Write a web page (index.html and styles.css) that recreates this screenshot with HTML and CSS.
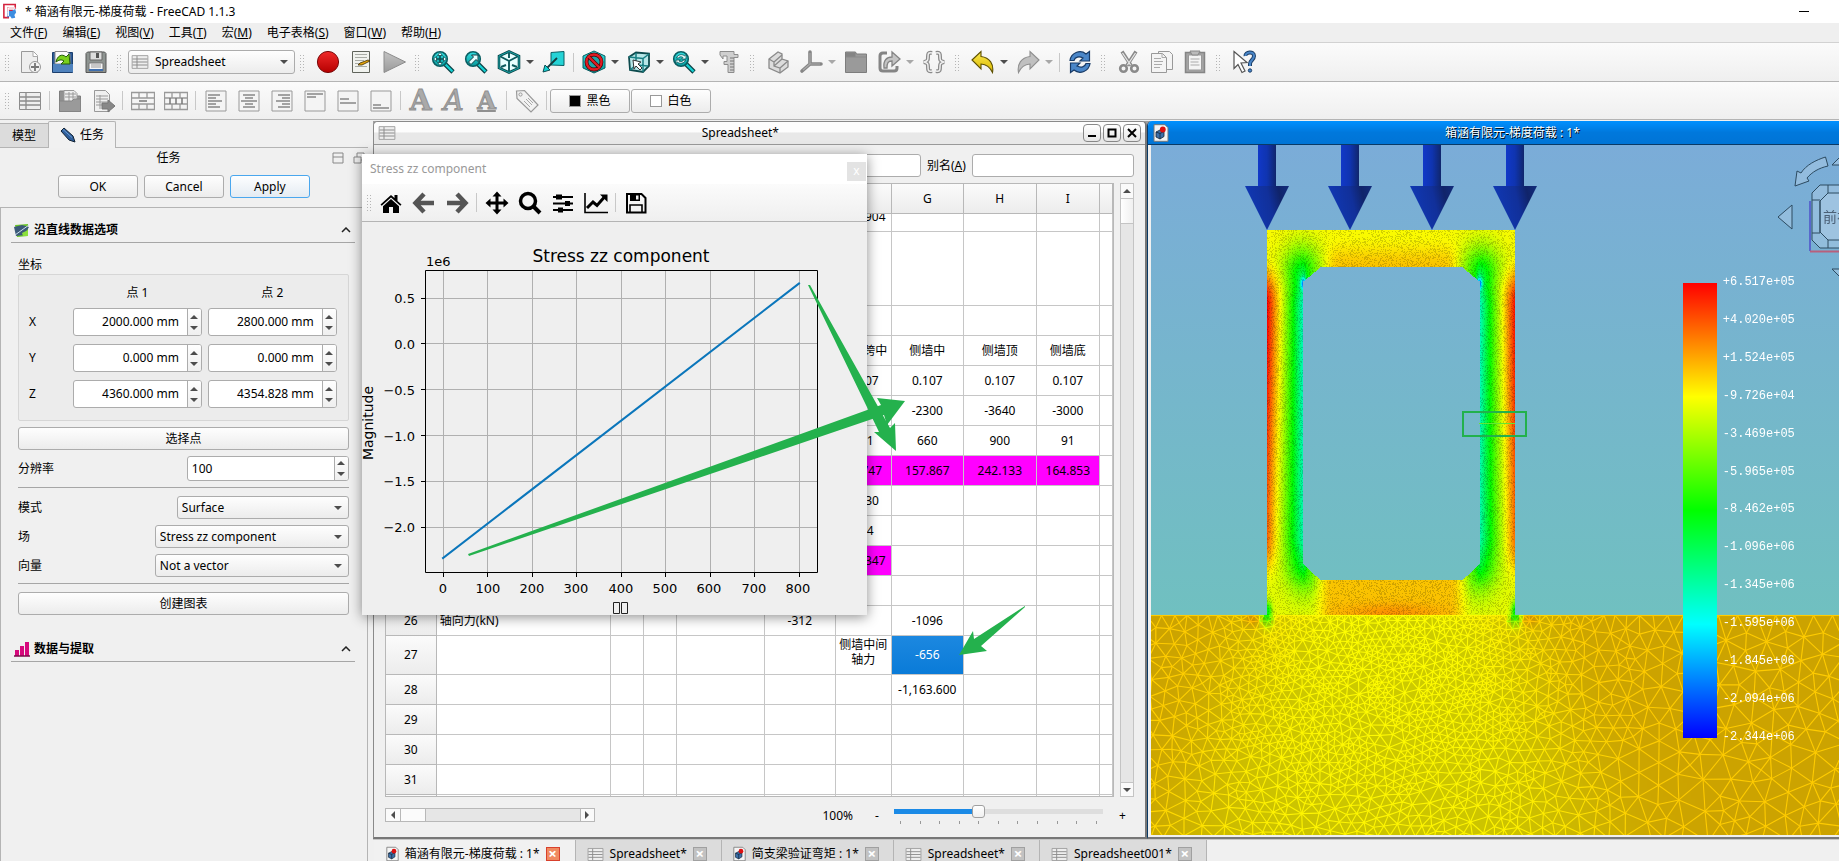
FILE: index.html
```
<!DOCTYPE html>
<html lang="zh-CN">
<head>
<meta charset="utf-8">
<title>箱涵有限元-梯度荷载 - FreeCAD 1.1.3</title>
<link rel="stylesheet" href="styles.css">
</head>
<body>
<svg class="defs" width="0" height="0" aria-hidden="true">
  <defs>
    <linearGradient id="gTeal" x1="0" y1="0" x2="0" y2="1"><stop offset="0" stop-color="#34e0e2"/><stop offset="1" stop-color="#06989a"/></linearGradient>
    <linearGradient id="gGray" x1="0" y1="0" x2="0" y2="1"><stop offset="0" stop-color="#c4c4c4"/><stop offset="1" stop-color="#9a9a9a"/></linearGradient>
    <linearGradient id="gRed" x1="0" y1="0" x2="0" y2="1"><stop offset="0" stop-color="#f02a2a"/><stop offset="1" stop-color="#b50000"/></linearGradient>
    <linearGradient id="gYel" x1="0" y1="0" x2="0" y2="1"><stop offset="0" stop-color="#fce94f"/><stop offset="1" stop-color="#d9b800"/></linearGradient>
    <symbol id="sheet" viewBox="0 0 24 24"><path d="M1.500 3.500h21v17h-21z" fill="#eee" stroke="#8c8c8c"/><path d="M2 8h20M2 12h20M2 16h20M8 4v16" stroke="#8c8c8c" stroke-width="1.300"/></symbol>
    <symbol id="doc3d" viewBox="0 0 16 18"><path d="M1 .7h11l3 3v13.600H1z" fill="#f4f4f4" stroke="#777"/><path d="M3 8l4-2 4 1.500v5L7 15l-4-2z" fill="#3d6fa8" stroke="#123" stroke-width=".8"/><path d="M3 8l4 1.500 4-2M7 9.500V15" stroke="#123" stroke-width=".8" fill="none"/><circle cx="9.800" cy="5.500" r="2.900" fill="#d11"/></symbol>
    <symbol id="lens" viewBox="0 0 24 24"><path d="M14 14l8 8" stroke="#0b3f43" stroke-width="4.600"/><path d="M14 14l7.500 7.500" stroke="#16d0d2" stroke-width="2.400"/><circle cx="9" cy="9" r="7.300" fill="url(#gTeal)" stroke="#0b5f63" stroke-width="1.600"/></symbol>
  </defs>
</svg>

<header class="titlebar">
  <svg class="app-logo" viewBox="0 0 16 18"><path d="M1 1h13v4H6v3h5v4H6v4H1z" fill="#fff" stroke="#d4213d" stroke-width="1.800"/><path d="M5 16V8l5 .5L14 6l1 4-2 3 1 3-4 1-2-3z" fill="#3d8de0"/><path d="M6 5h8M6 5v9" stroke="#fff" stroke-width="1.500"/></svg>
  <span>* 箱涵有限元-梯度荷载 - FreeCAD 1.1.3</span>
  <button class="win-min" aria-label="最小化"></button>
</header>
<nav class="menubar">
  <button>文件(<u>F</u>)</button><button>编辑(<u>E</u>)</button><button>视图(<u>V</u>)</button><button>工具(<u>T</u>)</button><button>宏(<u>M</u>)</button><button>电子表格(<u>S</u>)</button><button>窗口(<u>W</u>)</button><button>帮助(<u>H</u>)</button>
</nav>

<div class="toolbar">
  <i class="grip grip-first"></i>
  <button class="tb" aria-label="新建"><svg viewBox="0 0 24 24"><path d="M3.500 1.500h12l4 4v17h-16z" fill="#eee" stroke="#999"/><path d="M15 1.500v5h5" fill="#fff" stroke="#aaa"/><circle cx="17" cy="17" r="5.500" fill="#f4f4f4" stroke="#999"/><path d="M17 13v8M13 17h8" stroke="#777" stroke-width="1.800"/></svg></button>
  <button class="tb" aria-label="打开"><svg viewBox="0 0 24 24"><path d="M1.500 2.500h20v20h-20z" fill="#2d5c98" stroke="#1c3f6e"/><path d="M4 1.500h12l3 3V14H4z" fill="#fafafa" stroke="#888"/><path d="M2 14h20v8H2z" fill="#4f82bd"/><path d="M5 12c1-6 6-9 10-5l3-3 1 10h-9l3-3c-3-2-5-1-8 1z" fill="#7ad01c" stroke="#235b08"/></svg></button>
  <button class="tb" aria-label="保存"><svg viewBox="0 0 24 24"><path d="M2 3.500L3.500 2h17L22 3.500v19H2z" fill="#8e9491" stroke="#555"/><path d="M6 2h12v8H6z" fill="#ddd" stroke="#666"/><path d="M12 3h3v5h-3z" fill="#555"/><path d="M5 13h14v8H5z" fill="#f6f6f6" stroke="#777"/><path d="M7 15h10M7 17h10" stroke="#999"/><path d="M5 19h14v2H5z" fill="#3f6fae"/></svg></button>
  <i class="grip"></i>
  <label class="combo wb"><svg class="wb-ico"><use href="#sheet"/></svg><select aria-label="工作台"><option>Spreadsheet</option></select></label>
  <i class="grip"></i>
  <button class="tb" aria-label="录制宏"><svg viewBox="0 0 24 24"><circle cx="12" cy="12" r="10.600" fill="url(#gRed)" stroke="#7a0b0b"/></svg></button>
  <button class="tb" aria-label="宏"><svg viewBox="0 0 24 24"><path d="M3.500 1.500h17v21h-17z" fill="#f1f3ef" stroke="#60645c"/><path d="M6 4.500h12M6 7.500h12M6 10.500h9M6 13.500h5M6 16.500h12" stroke="#a8aba5"/><path d="M9 15l2-2 8-3 2 1-8 4z" fill="#e5a50a" stroke="#3c2b00" stroke-width=".8"/></svg></button>
  <button class="tb" aria-label="执行宏"><svg viewBox="0 0 24 24"><path d="M2 1.500v21L23.500 12z" fill="url(#gGray)" stroke="#8c8c8c"/></svg></button>
  <i class="grip"></i>
  <button class="tb" aria-label="全部适应"><svg viewBox="0 0 24 24"><use href="#lens"/><path d="M9 4v10M4 9h10" stroke="#0c4b50" stroke-width="1.600"/><path d="M9 2.500l2.500 3h-5zM9 15.500l2.500-3h-5zM2.500 9l3-2.500v5zM15.500 9l-3-2.500v5z" fill="#e9ffff" stroke="#0c4b50" stroke-width=".8"/></svg></button>
  <button class="tb" aria-label="适应选择"><svg viewBox="0 0 24 24"><use href="#lens"/><path d="M4.500 12l5-5-2-2H14v6.500l-2-2-5 5z" fill="#e9ffff" stroke="#0c3b40"/></svg></button>
  <button class="tb" aria-label="等轴测"><svg viewBox="0 0 24 24"><path d="M12 1.500l10 4.500v12l-10 4.500L2 18V6z" fill="#e8ffff" stroke="#0d4a4d" stroke-width="2.600"/><path d="M2.500 6L12 11l9.500-5M12 11v11M12 2v6M4 17l5-2M20 17l-5-2" stroke="#0d5a5d" stroke-width="1.900" fill="none"/><path d="M12 1.500l10 4.500v12l-10 4.500L2 18V6z" fill="none" stroke="#17b8bb" stroke-width=".8"/></svg></button><i class="dd"></i>
  <button class="tb" aria-label="与所选对齐"><svg viewBox="0 0 24 24"><path d="M9 2.500l13-1v14l-13-.5z" fill="#25d3d6" stroke="#0b5f63"/><path d="M15 8L4 19" stroke="#123c3e" stroke-width="1.800"/><path d="M1 22l2-7 5 5z" fill="#16d0d2" stroke="#0b4c50"/></svg></button>
  <i class="sep"></i>
  <button class="tb" aria-label="绘图样式"><svg viewBox="0 0 24 24"><path d="M12 1l11 5v12l-11 5L1 18V6z" fill="url(#gTeal)" stroke="#0b5f63"/><circle cx="12" cy="12" r="7.500" fill="#1fa5a8" stroke="#460404" stroke-width="3.800"/><circle cx="12" cy="12" r="7.500" fill="none" stroke="#e01b24" stroke-width="2.400"/><path d="M7 7l10 10" stroke="#460404" stroke-width="3.800"/><path d="M6.500 6.500l11 11" stroke="#e01b24" stroke-width="2.400"/></svg></button><i class="dd"></i>
  <button class="tb" aria-label="边界框"><svg viewBox="0 0 24 24"><path d="M2 7l7-4.500 13 1V16l-6 6-13-2z" fill="#b7e6e7" stroke="#0d4a4d" stroke-width="1.800"/><path d="M2 7l14 1.500L22 4M16 8.500V22M9 3v12l-6 5M9 15l12 1" fill="none" stroke="#177f83" stroke-width="1.500"/><path d="M6 10l8 2-3 2 4 4-2 2-4-4-2 3z" fill="#fff" stroke="#333"/></svg></button><i class="dd"></i>
  <button class="tb" aria-label="同步视图"><svg viewBox="0 0 24 24"><use href="#lens"/><path d="M4.500 8C6 4 11 4 12.500 6L14 4.500V9H9.500l1.500-1.500C9 6 7 7 6.500 8zM13.500 10c-1.500 4-6.500 4-8 2L4 13.500V10h4.500L7 11c2 1 4 .5 4.500-1z" fill="#e9ffff" stroke="#0c4b50" stroke-width=".8"/></svg></button><i class="dd"></i>
  <button class="tb" aria-label="测量"><svg viewBox="0 0 24 24"><path d="M3 1.500h14v3h4v3h-4v15h-6v-8H7v-3h3V6H6v3L3 5z" fill="#cfcfcf" stroke="#8c8c8c"/><path d="M13 8h4M13 11h4M13 14h4M13 17h4M13 20h4" stroke="#777"/></svg></button>
  <i class="grip"></i>
  <button class="tb" aria-label="零件"><svg viewBox="0 0 24 24"><path d="M3 9l9-7 4 2v5l6 2v6l-8 6-11-5z" fill="#dcdcdc" stroke="#8a8a8a" stroke-width="1.300"/><path d="M3 9l5 3v4l6 2 8-7M8 12l8-7M8 16l8-7M14 18v5" fill="none" stroke="#8a8a8a" stroke-width="1.300"/></svg></button>
  <button class="tb" aria-label="坐标系"><svg viewBox="0 0 24 24"><path d="M11 2v12M11 14h11M11 14l-8 7" stroke="#858585" stroke-width="3.600" stroke-linecap="round"/><path d="M11 3v11h10M11 14l-7 6" stroke="#a9a9a9" stroke-width="1.200" fill="none"/></svg></button><i class="dd dim"></i>
  <button class="tb" aria-label="组"><svg viewBox="0 0 24 24"><path d="M1.500 2h10l1 2h10v18.500h-21z" fill="#9a9a9a" stroke="#7d7d7d"/><path d="M2 2.500h9.500V7H2z" fill="#848484"/><path d="M2 7h20" stroke="#8a8a8a"/></svg></button>
  <button class="tb" aria-label="链接"><svg viewBox="0 0 24 24"><path d="M10 3H6Q3 3 3 6v12q0 3 3 3h11q3 0 3-3v-2" fill="none" stroke="#858585" stroke-width="3"/><path d="M7 18c-1-8 3-11 8-11V2l8 7-8 7v-5c-4 0-5 2-5 7z" fill="#c4c4c4" stroke="#858585" stroke-width="1.300"/></svg></button><i class="dd dim"></i>
  <button class="tb" aria-label="变量集"><svg viewBox="0 0 24 24"><path d="M10 3C6 2 6 4 6 7s0 4-4 5c4 1 4 2 4 5s0 5 4 4M14 3c4-1 4 1 4 4s0 4 4 5c-4 1-4 2-4 5s0 5-4 4" fill="none" stroke="#8a8a8a" stroke-width="4"/><path d="M10 3C6 2 6 4 6 7s0 4-4 5c4 1 4 2 4 5s0 5 4 4M14 3c4-1 4 1 4 4s0 4 4 5c-4 1-4 2-4 5s0 5-4 4" fill="none" stroke="#eee" stroke-width="1.500"/></svg></button>
  <i class="grip"></i>
  <button class="tb" aria-label="撤销"><svg viewBox="0 0 24 24"><path d="M1 10L10 1.500v5c9 1 13 8 11.500 16C19 17 16 14.500 10 14v5z" fill="url(#gYel)" stroke="#5d5000" stroke-width="1.100"/></svg></button><i class="dd"></i>
  <button class="tb" aria-label="重做"><svg viewBox="0 0 24 24"><path d="M23 10L14 1.500v5C5 7.500 1 14.500 2.500 22.500 5 17 8 14.500 14 14v5z" fill="#c0c0c0" stroke="#8f8f8f" stroke-width="1.100"/></svg></button><i class="dd dim"></i>
  <i class="sep"></i>
  <button class="tb" aria-label="刷新"><svg viewBox="0 0 24 24"><path d="M2 10.500C3 3 12-1 18 4l3.500-2.500v9.500H12l3-3c-4-2-8-1-9 2.500zM22 13.500c-1 7.500-10 11.500-16 6.500l-3.500 2.500V13H12l-3 3c4 2 8 1 9-2.500z" fill="#4a86c8" stroke="#173a66" stroke-width="1.200"/></svg></button>
  <i class="grip"></i>
  <button class="tb" aria-label="剪切"><svg viewBox="0 0 24 24"><path d="M5 1.500l9 14M19 1.500l-9 14" stroke="#8a8a8a" stroke-width="3.500"/><path d="M5.500 3l8 12M18.500 3l-8 12" stroke="#e6e6e6" stroke-width="1.300"/><ellipse cx="6.500" cy="18.500" rx="3.300" ry="3.300" fill="#f3f3f3" stroke="#8a8a8a" stroke-width="2.600"/><ellipse cx="17.500" cy="18.500" rx="3.300" ry="3.300" fill="#f3f3f3" stroke="#8a8a8a" stroke-width="2.600"/></svg></button>
  <button class="tb" aria-label="复制"><svg viewBox="0 0 24 24"><path d="M8.500 1.500h11l3 3v15h-14z" fill="#f4f4f4" stroke="#999"/><path d="M1.500 3.500h11l4 4v15h-15z" fill="#f4f4f4" stroke="#999"/><path d="M4 8.500h7M4 11.500h9M4 14.500h8M4 17.500h6M12 3.500v4h4" stroke="#aaa" fill="none"/></svg></button>
  <button class="tb" aria-label="粘贴"><svg viewBox="0 0 24 24"><path d="M2.500 2.500h19v20h-19z" fill="#a5a5a5" stroke="#858585" stroke-width="1.500"/><path d="M5.500 5h13v15h-13z" fill="#f4f4f4" stroke="#999"/><path d="M7 1h10l-2 4H9z" fill="#bbb" stroke="#888"/><path d="M7.500 9h9M7.500 12h8M7.500 15h9" stroke="#aaa"/></svg></button>
  <i class="grip"></i>
  <button class="tb" aria-label="这是什么？"><svg viewBox="0 0 24 24"><path d="M2 1.500l13 11-6 .5 4 8-3 1.500-4-8-4 4z" fill="#fff" stroke="#555" stroke-width="1.200"/><path d="M13.500 6C13 2 22 .5 22 6c0 4-4 4-4 8v2" fill="none" stroke="#1e3f66" stroke-width="4"/><path d="M13.500 6C13 2 22 .5 22 6c0 4-4 4-4 8v2" fill="none" stroke="#4a86c8" stroke-width="2"/><circle cx="18" cy="20.500" r="1.700" fill="#4a86c8" stroke="#1e3f66"/></svg></button>
</div>

<div class="toolbar toolbar-2">
  <i class="grip grip-first"></i>
  <button class="tb" aria-label="新建表格"><svg><use href="#sheet"/></svg></button>
  <i class="sep"></i>
  <button class="tb" aria-label="导入"><svg viewBox="0 0 24 24"><path d="M1.500 2h5v5h16v15.500h-21z" fill="#929292" stroke="#7d7d7d"/><path d="M6 1.500h10l3 3V13H6z" fill="#eee" stroke="#999"/><path d="M7 5h11M7 8h11M11 3v9M15 3v9" stroke="#999"/><path d="M1.500 12H14l2-2h6.500v12.500h-21z" fill="#9a9a9a" stroke="#858585"/></svg></button>
  <button class="tb" aria-label="导出"><svg viewBox="0 0 24 24"><path d="M3.500 1.500h11l4 4v17h-15z" fill="#f0f0f0" stroke="#999"/><path d="M5 7h12M5 10h12M5 13h12M5 16h6M9 6v14" stroke="#999"/><path d="M11 14h6v-3l7 6-7 6v-3h-6z" fill="#888" stroke="#777"/></svg></button>
  <i class="sep"></i>
  <button class="tb" aria-label="合并"><svg viewBox="0 0 24 24"><path d="M.5 3.500h23v17H.5zM.5 9h23M.5 15h23M8 3v6M16 3v6M8 15v5M16 15v5" fill="none" stroke="#999" stroke-width="1.300"/><path d="M8 12h8" stroke="#777" stroke-width="1.500"/></svg></button>
  <button class="tb" aria-label="拆分"><svg viewBox="0 0 24 24"><path d="M.5 3.500h23v17H.5zM.5 9h23M.5 15h23M8 3v6M16 3v6M8 15v5M16 15v5" fill="none" stroke="#999" stroke-width="1.300"/><path d="M6 9v6M12 9v6M18 9v6" stroke="#777" stroke-width="1.500"/></svg></button>
  <i class="sep"></i>
  <button class="tb" aria-label="左对齐"><svg viewBox="0 0 24 24"><path d="M2 2h20v20H2z" class="abox"/><path d="M4 6h12M4 9h8M4 12h14M4 15h8M4 18h12" class="abar"/></svg></button>
  <button class="tb" aria-label="水平居中"><svg viewBox="0 0 24 24"><path d="M2 2h20v20H2z" class="abox"/><path d="M6 6h12M8 9h8M4 12h16M8 15h8M6 18h12" class="abar"/></svg></button>
  <button class="tb" aria-label="右对齐"><svg viewBox="0 0 24 24"><path d="M2 2h20v20H2z" class="abox"/><path d="M8 6h12M12 9h8M6 12h14M12 15h8M8 18h12" class="abar"/></svg></button>
  <button class="tb" aria-label="顶端对齐"><svg viewBox="0 0 24 24"><path d="M2 2h20v20H2z" class="abox"/><path d="M4 5h16M4 8h9" class="abar"/></svg></button>
  <button class="tb" aria-label="垂直居中"><svg viewBox="0 0 24 24"><path d="M2 2h20v20H2z" class="abox"/><path d="M4 10h9M4 14h16" class="abar"/></svg></button>
  <button class="tb" aria-label="底端对齐"><svg viewBox="0 0 24 24"><path d="M2 2h20v20H2z" class="abox"/><path d="M4 16h8M4 19h16" class="abar"/></svg></button>
  <i class="sep"></i>
  <button class="tb glyph"><b>A</b></button>
  <button class="tb glyph"><em>A</em></button>
  <button class="tb glyph under"><b>A</b></button>
  <i class="sep"></i>
  <button class="tb" aria-label="别名"><svg viewBox="0 0 24 24"><path d="M1.500 2l8-.5L23 16l-7 7L2 9.500z" fill="#f2f2f2" stroke="#999" stroke-width="1.200"/><circle cx="5.500" cy="5.500" r="1.600" fill="none" stroke="#999"/><path d="M11 10l6 6M9 12l6 6M13 9l5 5" stroke="#aaa"/></svg></button>
  <i class="sep"></i>
  <button class="color"><i class="sw black"></i>黑色</button>
  <button class="color"><i class="sw white"></i>白色</button>
</div>

<main class="work">
  <aside class="dock">
    <div class="dock-tabs">
      <button class="dtab">模型</button>
      <button class="dtab on"><svg viewBox="0 0 16 16"><path d="M1 4l3-3 9 8 2 6-6-2z" fill="#2f5f9c" stroke="#123"/><path d="M3 2.500l9 8" stroke="#6b9bd2"/></svg>任务</button>
    </div>
    <div class="dock-title"><span>任务</span>
      <svg viewBox="0 0 12 12"><path d="M1 1h10v10H1zM1 5h10" /></svg>
      <svg viewBox="0 0 12 12"><path d="M1 5h7v6H1zM4 5V1h7v7H8" /></svg>
    </div>
    <div class="dlg"><button class="btn">OK</button><button class="btn">Cancel</button><button class="btn focus">Apply</button></div>
    <div class="panel">
      <h2 class="sec"><svg viewBox="0 0 16 16"><path d="M1 3l13-1v12L3 15z" fill="#6cc52a"/><path d="M0 5l8-2 7 2-5 8-8 1z" fill="#3b5a78"/><path d="M1 13L15 3" stroke="#cde" stroke-width="1"/><path d="M8 11l6-3v6H9z" fill="#8be03a"/></svg><span>沿直线数据选项</span><svg class="chev" viewBox="0 0 10 6"><path d="M1 5l4-4 4 4"/></svg></h2>
      <div class="form">
        <div class="cap">坐标</div>
        <div class="group">
          <span></span><span class="ct">点 1</span><span class="ct">点 2</span>
          <span>X</span><div class="spin"><input aria-label="X 点 1" value="2000.000 mm"><i></i></div><div class="spin"><input aria-label="X 点 2" value="2800.000 mm"><i></i></div>
          <span>Y</span><div class="spin"><input aria-label="Y 点 1" value="0.000 mm"><i></i></div><div class="spin"><input aria-label="Y 点 2" value="0.000 mm"><i></i></div>
          <span>Z</span><div class="spin"><input aria-label="Z 点 1" value="4360.000 mm"><i></i></div><div class="spin"><input aria-label="Z 点 2" value="4354.828 mm"><i></i></div>
        </div>
        <button class="btn wide">选择点</button>
        <div class="frow"><label for="res">分辨率</label><div class="spin left"><input id="res" value="100"><i></i></div></div>
        <hr>
        <div class="frow"><label for="mode">模式</label><span class="combo mid"><select id="mode"><option>Surface</option></select></span></div>
        <div class="frow"><label for="field">场</label><span class="combo big"><select id="field"><option>Stress zz component</option></select></span></div>
        <div class="frow"><label for="vec">向量</label><span class="combo big"><select id="vec"><option>Not a vector</option></select></span></div>
        <hr>
        <button class="btn wide">创建图表</button>
      </div>
      <h2 class="sec"><svg viewBox="0 0 16 16"><path d="M1 9h4v6H1zM6 5h4v10H6zM11 1h4v14h-4z" fill="#d6087c"/><path d="M0 15h16" stroke="#7b0b4a" stroke-width="1.500"/></svg><span>数据与提取</span><svg class="chev" viewBox="0 0 10 6"><path d="M1 5l4-4 4 4"/></svg></h2>
    </div>
  </aside>

  <section class="mdi">
    <div class="subs">
      <article class="sub sheet">
        <header class="sub-title"><svg><use href="#sheet"/></svg><span>Spreadsheet*</span>
          <button aria-label="最小化"><svg viewBox="0 0 10 10"><path d="M1 8h8"/></svg></button><button aria-label="最大化"><svg viewBox="0 0 10 10"><path d="M1.500 1.500h7v7h-7z"/></svg></button><button aria-label="关闭"><svg viewBox="0 0 10 10"><path d="M1 1l8 8M9 1L1 9"/></svg></button>
        </header>
        <div class="sub-body">
          <div class="cellbar"><input class="content" aria-label="内容"><label for="alias">别名(<u>A</u>)</label><input class="alias" id="alias"></div>
          <div class="gridrow">
            <div class="gridwrap">
              <table>
                <colgroup><col class="c0"><col class="cA"><col class="cB"><col class="cB"><col class="cD"><col class="cE"><col class="cF"><col class="cG"><col class="cH"><col class="cI"><col></colgroup>
                <thead><tr><th></th><th>A</th><th>B</th><th>C</th><th>D</th><th>E</th><th>F</th><th>G</th><th>H</th><th>I</th><th></th></tr></thead>
                <tbody>
                <tr class="cut"><th>14</th><td></td><td></td><td></td><td></td><td></td><td><div>131.904</div></td><td></td><td></td><td></td><td></td></tr>
                <tr class="tall"><th>15</th><td></td><td></td><td></td><td></td><td></td><td></td><td></td><td></td><td></td><td></td></tr>
                <tr><th>16</th><td></td><td></td><td></td><td></td><td></td><td></td><td></td><td></td><td></td><td></td></tr>
                <tr><th>17</th><td></td><td></td><td></td><td></td><td></td><td>顶板跨中</td><td>侧墙中</td><td>侧墙顶</td><td>侧墙底</td><td></td></tr>
                <tr><th>18</th><td></td><td></td><td></td><td></td><td></td><td>0.107</td><td>0.107</td><td>0.107</td><td>0.107</td><td></td></tr>
                <tr><th>19</th><td></td><td></td><td></td><td></td><td></td><td></td><td>-2300</td><td>-3640</td><td>-3000</td><td></td></tr>
                <tr><th>20</th><td></td><td></td><td></td><td></td><td></td><td>341</td><td>660</td><td>900</td><td>91</td><td></td></tr>
                <tr><th>21</th><td></td><td></td><td></td><td></td><td></td><td class="mg">36.747</td><td class="mg">157.867</td><td class="mg">242.133</td><td class="mg">164.853</td><td></td></tr>
                <tr><th>22</th><td></td><td></td><td></td><td></td><td></td><td>-1230</td><td></td><td></td><td></td><td></td></tr>
                <tr><th>23</th><td></td><td></td><td></td><td></td><td></td><td>314</td><td></td><td></td><td></td><td></td></tr>
                <tr><th>24</th><td></td><td></td><td></td><td></td><td></td><td class="mg">131.347</td><td></td><td></td><td></td><td></td></tr>
                <tr><th>25</th><td></td><td></td><td></td><td></td><td></td><td></td><td></td><td></td><td></td><td></td></tr>
                <tr><th>26</th><td class="l">轴向力(kN)</td><td></td><td></td><td></td><td>-312</td><td></td><td>-1096</td><td></td><td></td><td></td></tr>
                <tr class="two"><th>27</th><td></td><td></td><td></td><td></td><td></td><td class="wrap">侧墙中间轴力</td><td class="sel">-656</td><td></td><td></td><td></td></tr>
                <tr><th>28</th><td></td><td></td><td></td><td></td><td></td><td></td><td>-1,163.600</td><td></td><td></td><td></td></tr>
                <tr><th>29</th><td></td><td></td><td></td><td></td><td></td><td></td><td></td><td></td><td></td><td></td></tr>
                <tr><th>30</th><td></td><td></td><td></td><td></td><td></td><td></td><td></td><td></td><td></td><td></td></tr>
                <tr><th>31</th><td></td><td></td><td></td><td></td><td></td><td></td><td></td><td></td><td></td><td></td></tr>
                <tr><th></th><td></td><td></td><td></td><td></td><td></td><td></td><td></td><td></td><td></td><td></td></tr>
                </tbody>
              </table>
            </div>
            <div class="vscroll"><i class="up"></i><i class="thumb"></i><i class="fill"></i><i class="down"></i></div>
          </div>
          <div class="statusrow">
            <div class="hscroll"><i class="lt"></i><i class="thumb"></i><i class="fill"></i><i class="rt"></i></div>
            <label class="pct" for="zoom">100%</label><span class="minus">-</span>
            <div class="zoomer"><input type="range" id="zoom" min="60" max="160" value="100"><div class="ticks"><i></i><i></i><i></i><i></i><i></i><i></i><i></i><i></i><i></i><i></i><i></i></div></div>
            <span class="plus">+</span>
          </div>
        </div>
      </article>
      <article class="sub view">
        <header class="sub-title blue"><svg><use href="#doc3d"/></svg><span>箱涵有限元-梯度荷载 : 1*</span></header>
        <div class="scene">
          <canvas id="fem"></canvas>
          <div class="legend">
            <div class="bar"></div>
            <ol><li>+6.517e+05</li><li>+4.020e+05</li><li>+1.524e+05</li><li>-9.726e+04</li><li>-3.469e+05</li><li>-5.965e+05</li><li>-8.462e+05</li><li>-1.096e+06</li><li>-1.345e+06</li><li>-1.595e+06</li><li>-1.845e+06</li><li>-2.094e+06</li><li>-2.344e+06</li></ol>
          </div>
          <svg class="cube" viewBox="0 0 63 140" width="63" height="140">
            <g fill="#a8c8e4" fill-opacity=".55" stroke="#2c4a60" stroke-width="1">
              <path d="M49.500 12C40 15 30 20 25 28l-4-2-2 15 14-5-2-3c5-6 12-10 21-12z"/>
              <path d="M2 72l14-12v24z"/><path d="M56 20L75 1v19zM56 124h20v20z"/>
              <path d="M36 48l8-8h55v63H44l-8-8z"/><path d="M44 56l8-8h50v47H52l-8-8z"/>
              <path d="M36 55h8M52 40v8M36 88h8M52 95v8M44 56v32" fill="none"/>
            </g>
            <text x="47" y="77" class="cube-t">前视</text>
            <path d="M34 56v50" stroke="#5868cc" stroke-width="2"/><path d="M34 106.500h30" stroke="#b8607c" stroke-width="2"/>
          </svg>
        </div>
      </article>
    </div>
    <nav class="wtabs">
      <button class="wtab on"><svg class="d"><use href="#doc3d"/></svg>箱涵有限元-梯度荷载 : 1*<i>×</i></button>
      <button class="wtab"><svg><use href="#sheet"/></svg>Spreadsheet*<i>×</i></button>
      <button class="wtab"><svg class="d"><use href="#doc3d"/></svg>简支梁验证弯矩 : 1*<i>×</i></button>
      <button class="wtab"><svg><use href="#sheet"/></svg>Spreadsheet*<i>×</i></button>
      <button class="wtab"><svg><use href="#sheet"/></svg>Spreadsheet001*<i>×</i></button>
    </nav>
  </section>
</main>

<div class="plotwin">
  <header><span>Stress zz component</span><button aria-label="关闭">x</button></header>
  <div class="plotbar">
    <i class="grip"></i>
    <button aria-label="Home"><svg viewBox="0 0 24 24"><path d="M12 4L1.500 13.500l1.200 1.300L12 6.500l9.300 8.300 1.200-1.300-4-3.600V4h-3v3z"/><path d="M12 8l-8 7.200V22h6v-6h4v6h6v-6.800z"/></svg></button>
    <button aria-label="Back" class="dim"><svg viewBox="0 0 24 24"><path d="M12 3L3.500 12l8.500 9M4 12h18" fill="none" stroke="#555" stroke-width="4.500"/></svg></button>
    <button aria-label="Forward" class="dim"><svg viewBox="0 0 24 24"><path d="M12 3l8.500 9-8.500 9M20 12H2" fill="none" stroke="#555" stroke-width="4.500"/></svg></button>
    <i class="sep"></i>
    <button aria-label="Pan"><svg viewBox="0 0 24 24"><path d="M12 .5l4.500 5h-3v5h5v-3l5 4.500-5 4.500v-3h-5v5h3l-4.500 5-4.500-5h3v-5h-5v3L.5 12l5-4.500v3h5v-5h-3z"/></svg></button>
    <button aria-label="Zoom"><svg viewBox="0 0 24 24"><circle cx="10" cy="10" r="7.500" fill="none" stroke="#000" stroke-width="3.500"/><path d="M15 15l7 7" stroke="#000" stroke-width="4"/></svg></button>
    <button aria-label="Subplots"><svg viewBox="0 0 24 24"><path d="M2 6h20M2 12.500h20M2 19h20" stroke="#000" stroke-width="2"/><path d="M5 3.500h6v5H5zM14 10h5v5h-5zM7 16.500h5v5H7z"/></svg></button>
    <button aria-label="Customize"><svg viewBox="0 0 24 24"><path d="M1 2v19.500h23" fill="none" stroke="#000" stroke-width="1.600"/><path d="M3 17l6-6 4 3.500 7-8" fill="none" stroke="#000" stroke-width="3"/><path d="M16 3.500h7.500V11z"/></svg></button>
    <i class="sep"></i>
    <button aria-label="Save"><svg viewBox="0 0 24 24"><path d="M3 3h14.500L21.500 7v14.500H3z" fill="none" stroke="#000" stroke-width="2"/><path d="M6 3h10v7H6z"/><path d="M12 4.500h2.500v4H12z" fill="#f3f3f3"/><path d="M6 21v-7h12v7" fill="none" stroke="#000" stroke-width="1.600"/></svg></button>
  </div>
  <svg class="plot" viewBox="362 222 505 393">
    <path d="M443.500 271v301M487.500 271v301M532.500 271v301M576.500 271v301M621.500 271v301M665.500 271v301M710.500 271v301M754.500 271v301M799.500 271v301M426 298.500h391M426 343.500h391M426 389.500h391M426 435.500h391M426 481.500h391M426 527.500h391" stroke="#b0b0b0" fill="none"/>
    <path d="M443 558L799 283.500" stroke="#0b76bb" stroke-width="2" stroke-linecap="square"/>
    <path d="M425.500 270.500h392v302h-392zM443.500 573v4M487.500 573v4M532.500 573v4M576.500 573v4M621.500 573v4M665.500 573v4M710.500 573v4M754.500 573v4M799.500 573v4M425 298.500h-4M425 343.500h-4M425 389.500h-4M425 435.500h-4M425 481.500h-4M425 527.500h-4" stroke="#000" fill="none"/>
    <g class="tk mid"><text x="443" y="593">0</text><text x="488" y="593">100</text><text x="532" y="593">200</text><text x="576" y="593">300</text><text x="621" y="593">400</text><text x="665" y="593">500</text><text x="709" y="593">600</text><text x="754" y="593">700</text><text x="798" y="593">800</text></g>
    <g class="tk end"><text x="415" y="303">0.5</text><text x="415" y="349">0.0</text><text x="415" y="395">−0.5</text><text x="415" y="441">−1.0</text><text x="415" y="486">−1.5</text><text x="415" y="532">−2.0</text></g>
    <text x="426" y="266" class="tk">1e6</text>
    <text x="621" y="262" class="pt">Stress zz component</text>
    <text class="tk ylab" transform="translate(373 423) rotate(-90)">Magnitude</text>
    <path d="M613.500 602.500h6v11h-6zM621.500 602.500h6v11h-6z" fill="none" stroke="#222"/>
  </svg>
</div>

<svg class="notes" width="1100" height="700" viewBox="0 0 1100 700" aria-hidden="true">
  <path d="M468 554L881 405l-4-7 28 3-18 24-3-10-415 141z"/>
  <path d="M808 285l71 147h-5l22 19-1-28-5 5-80-143z"/>
  <path d="M1025 606l-51 33-1-8-14 24 28-4-6-5 44-39z"/>
</svg>
<script src="scene.js"></script>
</body>
</html>
```
FILE: styles.css
```
* { box-sizing: border-box; }
html, body { height: 100%; }
body {
  margin: 0; display: flex; flex-direction: column; overflow: hidden; position: relative;
  background: #f0f0f0; color: #000;
  font: 12px/16px "Noto Sans", "Noto Sans CJK SC", sans-serif;
}
button, input, select { font: inherit; color: inherit; margin: 0; padding: 0; }
button { border: 0; background: none; white-space: nowrap; }
svg { display: block; flex: none; }
i { font-style: normal; }
.defs { position: absolute; }

.titlebar { height: 23px; flex: none; background: #fff; display: flex; align-items: center; gap: 8px; padding: 0 30px 0 3px; }
.app-logo { width: 14px; height: 17px; }
.win-min { margin-left: auto; width: 10px; height: 1px; background: #000; }
.menubar { height: 20px; flex: none; display: flex; align-items: center; padding: 0 2px; border-bottom: 1px solid #d2d2d2; background: #efefef; }
.menubar button { padding: 0 7px 0 8px; }

.toolbar { height: 39px; flex: none; display: flex; align-items: center; background: linear-gradient(#fbfbfb, #efefef); border-bottom: 1px solid #b4b4b4; }
.toolbar-2 { height: 38px; }
.tb { width: 33px; height: 33px; flex: none; display: flex; align-items: center; justify-content: center; }
.tb svg { width: 24px; height: 24px; }
.grip { width: 16px; height: 17px; flex: none; background: radial-gradient(circle, #b5b5b5 1px, transparent 1px) 0 0 / 3px 3px content-box; padding: 0 6px 0 4px; }
.grip-first { width: 13px; padding: 0 3px 0 4px; }
.sep { width: 7px; height: 19px; flex: none; background: linear-gradient(#c8c8c8, #c8c8c8) center / 1px 100% no-repeat; }
.dd { width: 12px; flex: none; height: 4px; }
.dd::before, .combo::after { content: ""; display: block; width: 0; border: 4px solid transparent; border-top-color: #4d4d4d; border-bottom: 0; }
.dd::before { margin-left: 1px; }
.dd.dim::before { border-top-color: #a8a8a8; }
.glyph { font: 28px/28px "DejaVu Serif", serif; color: #aaa; -webkit-text-stroke: 1px #909090; }
.glyph em { font-style: italic; }
.glyph.under { font-size: 24px; text-decoration: underline; text-decoration-thickness: 2px; text-underline-offset: 1px; }
.abox { fill: #f4f4f4; stroke: #999; }
.abar { stroke: #868686; stroke-width: 1.5; }
.color { height: 24px; width: 80px; margin-right: 1px; border: 1px solid #acacac; border-radius: 3px; background: linear-gradient(#fefefe, #ececec); display: flex; align-items: center; justify-content: center; gap: 5px; }
.sw { width: 12px; height: 12px; border: 1px solid #999; background: #fff; }
.sw.black { background: #000; }

.combo { position: relative; display: block; height: 23px; }
.combo select { appearance: none; width: 100%; height: 100%; border: 1px solid #acacac; border-radius: 3px; background: linear-gradient(#fefefe, #ececec); padding: 0 18px 0 4px; outline: 0; }
.combo::after { position: absolute; right: 7px; top: 10px; pointer-events: none; }
.wb { width: 167px; flex: none; height: 24px; }
.wb select { padding-left: 26px; }
.wb-ico { position: absolute; left: 3px; top: 3px; width: 18px; height: 18px; }

.work { flex: 1; min-height: 0; display: flex; }
.dock { width: 20%; min-width: 350px; flex: none; display: flex; flex-direction: column; }
.dock-tabs { display: flex; align-items: flex-end; height: 28px; border-bottom: 1px solid #b4b4b4; padding-top: 1px; }
.dtab { height: 24px; padding: 0 12px 0 12px; background: #dcdcdc; border: 1px solid #b4b4b4; border-left: 0; border-bottom: 0; }
.dtab.on { height: 27px; margin-bottom: -1px; background: #f1f1f1; display: flex; align-items: center; gap: 4px; border: 1px solid #b4b4b4; border-bottom: 0; border-radius: 2px 2px 0 0; padding: 0 11px; margin-left: -1px; }
.dtab.on svg { width: 16px; height: 16px; }
.dock-title { height: 20px; display: flex; align-items: center; gap: 9px; padding-right: 3px; }
.dock-title span { flex: 1; text-align: center; padding-left: 14px; }
.dock-title svg { width: 12px; height: 12px; fill: none; stroke: #888; }
.dlg { display: flex; justify-content: center; gap: 6px; padding: 7px 0 9px; }
.btn { height: 23px; width: 80px; border: 1px solid #acacac; border-radius: 3px; background: linear-gradient(#fefefe, #ececec); }
.btn.focus { border-color: #4aa7ee; background: linear-gradient(#fdfeff, #e4ebf2); }
.btn.wide { width: 100%; }
.panel { flex: 1; border: 1px solid #b4b4b4; border-bottom: 0; padding: 12px 12px 0 10px; }
.sec { margin: 0; display: flex; align-items: center; gap: 4px; font-size: 12px; line-height: 16px; font-weight: 700; height: 23px; padding: 0 4px 3px 3px; border-bottom: 1px solid #a6a6a6; }
.sec > svg { width: 16px; height: 16px; }
.sec .chev { width: 10px; height: 6px; margin-left: auto; fill: none; stroke: #222; stroke-width: 1.5; }
.form { padding: 14px 6px 24px 7px; }
.cap { height: 17px; }
.group { border: 1px solid #d6d6d6; border-radius: 2px; background: #ececec; padding: 11px 11px 12px 10px; display: grid; grid-template-columns: 38px 1fr 1fr; column-gap: 6px; row-gap: 8px; align-items: center; margin-bottom: 6px; }
.ct { text-align: center; line-height: 14px; }
.spin { display: flex; height: 28px; border: 1px solid #acacac; border-radius: 3px; background: #fff; overflow: hidden; }
.spin input { flex: 1; min-width: 0; border: 0; outline: 0; background: none; text-align: right; padding-right: 8px; }
.spin.left input { text-align: left; padding-left: 4px; }
.spin > i { width: 14px; border-left: 1px solid #acacac; background: linear-gradient(#fefefe, #efefef); display: flex; flex-direction: column; align-items: center; justify-content: center; gap: 7px; }
.spin > i::before { content: ""; border: 4px solid transparent; border-bottom-color: #4d4d4d; border-top: 0; }
.spin > i::after { content: ""; border: 4px solid transparent; border-top-color: #4d4d4d; border-bottom: 0; }
.frow { display: flex; align-items: center; justify-content: space-between; margin-top: 6px; }
.frow .spin { width: 162px; height: 25px; }
.mid { width: 172px; }
.big { width: 194px; }
.form hr { border: 0; border-top: 1px solid #a6a6a6; margin: 6px 0 8px; }

.mdi { flex: 1; min-width: 0; display: flex; flex-direction: column; padding: 1px 0 0 5px; }
.subs { flex: 1; min-height: 0; display: flex; background: #a0a0a0; }
.sub { min-width: 0; display: flex; flex-direction: column; }
.sheet { flex: 773; border: 1px solid #8a8a8a; border-right: 2px solid #777; border-bottom: 2px solid #777; border-radius: 5px 5px 0 0; background: #f0f0f0; overflow: hidden; }
.view { flex: 693; border-left: 1px solid #0a3a66; border-radius: 5px 0 0 0; overflow: hidden; background: #f0f0f0; border-bottom: 2px solid #777; }
.sub-title { height: 23px; flex: none; display: flex; align-items: center; gap: 4px; padding: 0 4px; background: linear-gradient(#fdfdfd 45%, #e8e8e8 50%); border-bottom: 1px solid #999; }
.sub-title > svg { width: 18px; height: 18px; }
.sub-title span { flex: 1; text-align: center; }
.sub-title button { width: 18px; height: 18px; margin-left: -2px; border: 1px solid #888; border-radius: 4px; background: linear-gradient(#fff, #e6e6e6); display: flex; align-items: center; justify-content: center; }
.sub-title button svg { width: 10px; height: 10px; fill: none; stroke: #000; stroke-width: 2; }
.blue { height: 24px; background: linear-gradient(#0090ff, #0078dc 50%, #0074d6); color: #fff; border-color: #0a3a66; text-shadow: 1px 1px 0 #000; padding-left: 4px; }
.blue span { padding: 0 0 0 16px; }
.sub-body { flex: 1; min-height: 0; display: flex; flex-direction: column; padding: 9px 11px 0 11px; }
.cellbar { display: flex; align-items: center; gap: 6px; height: 23px; margin-bottom: 6px; }
.cellbar input { height: 23px; border: 1px solid #acacac; border-radius: 3px; background: #fff; min-width: 0; }
.content { flex: 1; }
.alias { flex: 0 0 162px; }
.gridrow { flex: 1; min-height: 0; display: flex; gap: 6px; }
.gridwrap { flex: 1; min-width: 0; overflow: hidden; border: 1px solid #b8b8b8; background: #fff; }
table { table-layout: fixed; border-collapse: separate; border-spacing: 0; width: 100%; }
.c0 { width: 51px; } .cA { width: 174px; } .cB { width: 33px; } .cD { width: 88px; } .cE { width: 71px; } .cF { width: 56px; } .cG { width: 72px; } .cH { width: 73px; } .cI { width: 63px; }
th, td { height: 30px; padding: 0; text-align: center; font-weight: 400; border: 0 solid #c6c6c6; border-width: 0 1px 1px 0; white-space: nowrap; overflow: hidden; }
th { background: linear-gradient(#fbfbfb, #ececec); border-color: #b8b8b8; }
.cut th, .cut td { height: 18px; line-height: 10px; vertical-align: top; }
.cut div { height: 10px; line-height: 6px; overflow: hidden; }
.tall th { height: 74px; }
.two th { height: 39px; }
td.l { text-align: left; padding-left: 3px; }
td.wrap { white-space: normal; line-height: 15px; vertical-align: top; padding: 1px 3px 0; }
td.mg { background: #f0f; }
td.sel { background: linear-gradient(#1c88e0, #0a7bd8); color: #fff; }
.vscroll { width: 14px; border: 1px solid #c4c4c4; background: #e6e6e6; display: flex; flex-direction: column; }
.vscroll i, .hscroll i { flex: none; }
.up, .down { height: 14px; display: flex; align-items: center; justify-content: center; background: #fafafa; }
.vscroll .thumb { height: 26px; background: linear-gradient(90deg, #fff, #f0f0f0); border: solid #c4c4c4; border-width: 1px 0; }
.vscroll .fill, .hscroll .fill { flex: 1; }
.down { border-top: 1px solid #c4c4c4; }
.up::before, .down::before, .lt::before, .rt::before { content: ""; border: 4px solid transparent; }
.up::before { border-bottom-color: #4d4d4d; border-top: 0; }
.down::before { border-top-color: #4d4d4d; border-bottom: 0; }
.lt::before { border-right-color: #4d4d4d; border-left: 0; }
.rt::before { border-left-color: #4d4d4d; border-right: 0; }
.statusrow { height: 40px; flex: none; display: flex; align-items: center; }
.hscroll { width: 210px; height: 14px; border: 1px solid #b8b8b8; background: #e6e6e6; display: flex; margin-bottom: 5px; }
.lt, .rt { width: 14px; display: flex; align-items: center; justify-content: center; background: #fafafa; }
.hscroll .thumb { width: 26px; background: #fbfbfb; border: solid #b8b8b8; border-width: 0 1px; }
.rt { border-left: 1px solid #b8b8b8; }
.pct { margin: 0 0 3px auto; }
.minus { margin: 0 15px 3px 22px; }
.plus { margin: 0 8px 3px 16px; }
.zoomer { width: 209px; flex: none; margin-bottom: 5px; }
.zoomer input { appearance: none; display: block; width: 100%; height: 13px; outline: 0; background: linear-gradient(90deg, #1b8ae6 42%, #dedede 42%) 0 4px / 100% 5px no-repeat; }
.zoomer input::-webkit-slider-thumb { appearance: none; width: 13px; height: 13px; border: 1px solid #a0a0a0; border-radius: 3px; background: linear-gradient(#fff, #f0f0f0); }
.ticks { display: flex; justify-content: space-between; padding: 3px 6px 0; }
.ticks i { width: 1px; height: 3px; background: #999; }

.scene { flex: 1; position: relative; margin: 0 0 2px 3px; background: linear-gradient(#7bacd8, #70c0c0 470px); overflow: hidden; }
.scene canvas { position: absolute; left: 0; top: 0; }
.legend { position: absolute; left: 532px; top: 138px; display: flex; gap: 6px; color: #fff; }
.legend .bar { width: 34px; height: 455px; background: linear-gradient(#f00, #ff0 25%, #0f0 50%, #0ff 75%, #00f); }
.legend ol { margin: -9px 0 -7px; padding: 0; list-style: none; display: flex; flex-direction: column; justify-content: space-between; font: 12px/16px "Liberation Mono", monospace; }
.cube { position: absolute; left: 625px; top: 0; }
.cube-t { font-size: 14px; fill: #4b6076; }

.wtabs { height: 22px; flex: none; display: flex; border-top: 1px solid #c6c6c6; background: #f0f0f0; padding-left: 1px; }
.wtab { display: flex; align-items: center; gap: 6px; padding: 7px 14px 0 11px; background: #dcdcdc; border-right: 1px solid #b4b4b4; }
.wtab.on { background: #f1f1f1; padding: 7px 15px 0 12px; }
.wtab svg { width: 17px; height: 17px; }
.wtab svg.d { width: 13px; height: 16px; }
.wtab i { width: 14px; height: 14px; background: #c2c2c2; border: 1px solid #a0a0a0; color: #fff; line-height: 11px; font-size: 15px; font-weight: 700; overflow: hidden; }
.wtab.on i { background: #f08a60; border-color: #d8402c; }

.plotwin { position: absolute; left: 362px; top: 154px; width: 505px; display: flex; flex-direction: column; background: #efefef; box-shadow: 0 2px 12px rgba(0, 0, 0, .45); }
.plotwin header { height: 30px; background: #fff; color: #999; display: flex; align-items: center; justify-content: space-between; padding: 0 1px 0 8px; }
.plotwin header button { width: 19px; height: 19px; background: #e3e3e3; color: #fff; margin-top: 4px; line-height: 16px; }
.plotbar { height: 38px; display: flex; align-items: center; border-bottom: 1px solid #b4b4b4; background: linear-gradient(#fbfbfb, #efefef); }
.plotbar button { width: 33px; display: flex; justify-content: center; }
.plotbar svg { width: 24px; height: 24px; }
.plotbar .grip { width: 12px; padding: 0 2px 0 4px; }
.plot { width: 505px; height: 393px; }
.tk { font: 13px "DejaVu Sans", sans-serif; }
.mid.tk, .ylab { text-anchor: middle; }
.tk.ylab { font-size: 14px; }
.end { text-anchor: end; }
.pt { font: 17px "DejaVu Sans", sans-serif; text-anchor: middle; }
.notes { position: absolute; left: 0; top: 0; pointer-events: none; fill: #24b14d; }
```
FILE: scene.js
```
(function () {
  var canvas = document.getElementById('fem');
  var W = canvas.width = canvas.parentNode.clientWidth;
  var H = canvas.height = canvas.parentNode.clientHeight;
  var g = canvas.getContext('2d');
  var seed = 7;
  function rnd() { seed = (seed * 1103515245 + 12345) % 2147483648; return seed / 2147483648; }
  function clamp(v, a, b) { return v < a ? a : v > b ? b : v; }
  function step(a, b, v) { v = clamp((v - a) / (b - a), 0, 1); return v * v * (3 - 2 * v); }
  function bump(x, y, cx, cy, sx, sy) { return Math.exp(-((x - cx) * (x - cx) / (2 * sx * sx) + (y - cy) * (y - cy) / (2 * sy * sy))); }

  // Geometry of the culvert, in view pixels
  var L = 116, R = 364, T = 85, G = 470, IL = 152, IR = 328, IT = 122, IB = 435, mid = 240;
  var ramp = [[255, 0, 0], [255, 255, 0], [0, 255, 0], [0, 255, 255], [0, 0, 255]];
  function color(f, k) {
    f = clamp(f, 0, 0.9999) * 4;
    var i = Math.floor(f), t = f - i, a = ramp[i], b = ramp[i + 1];
    return [0, 1, 2].map(function (c) { return Math.round((a[c] + (b[c] - a[c]) * t) * k); });
  }
  function css(c) { return 'rgb(' + c.join(',') + ')'; }

  function frameStress(x, y) {
    if (x > mid) x = 2 * mid - x;
    var t = clamp((x - L) / (IL - L), 0, 1);
    var d = step(136, 420, y);
    var wall = 0.1 * d + (0.7 - 0.12 * d) * t;
    var slab;
    if (y < 280) {
      slab = 0.25 - 0.055 * step(90, 122, y) * step(165, 185, x) + 0.26 * bump(x, y, 150, 128, 13, 20);
    } else {
      var base = 0.27 + 0.2 * bump(x, y, 152, 420, 12, 20) + 0.25 * bump(x, y, L, 466, 3, 7);
      var bed = 0.195 - 0.05 * bump(x, y, mid, 468, 34, 7);
      slab = base + (bed - base) * step(158, 182, x);
    }
    var w = step(108, 160, y) * (1 - step(390, 445, y)) * (1 - step(IL, IL + 5, x));
    return slab + (wall - slab) * w + 0.3 * bump(x, y, IL, 138, 2, 4);
  }
  function groundStress(x, y) {
    var dx = Math.abs(x - mid), dy = y - G;
    return 0.2 + 0.05 * Math.exp(-Math.pow(dx / (140 + dy * 0.35), 4)) * (1 - dy / 1200)
      + 0.25 * bump(dx, y, 124, G, 4, 7) - 0.04 * bump(dx, y, 138, G + 4, 6, 5);
  }
  function inside(x, y) {
    if (x < L || x >= R || y < T || y >= G) return false;
    var m = x > mid ? 2 * mid - x : x;
    if (m < IL || y < IT || y >= IB) return true;
    if (m - IL < 17 && y - IT < 14 * (1 - (m - IL) / 17)) return true;
    return m - IL < 17 && IB - y < 17 * (1 - (m - IL) / 17);
  }

  // Concrete frame, finely meshed
  for (var y = T; y < G; y++) for (var x = L; x < R; x++) if (inside(x, y)) {
    g.fillStyle = css(color(frameStress(x, y), rnd() < 0.28 ? 0.82 : 0.98));
    g.fillRect(x, y, 1, 1);
  }

  // Soil fill
  for (y = G; y < H; y += 2) for (x = 0; x < W; x += 4) {
    g.fillStyle = css(color(groundStress(x + 2, y + 1), 0.8));
    g.fillRect(x, y, 4, 2);
  }

  // Graded triangular mesh
  function size(x, y) {
    var dx = Math.max(0, Math.abs(x - mid) - 115), dy = Math.max(0, y - G);
    var slope = x < mid ? 0.085 - 0.0002 * dy : 0.075;
    return Math.min(19, 3.6 + dx * slope + dy * 0.006 + dy * dy * 0.0001);
  }
  var pts = [], cell = 20, grid = {};
  function add(x, y, fixed) {
    var p = { x: x, y: y, fixed: fixed, n: [] };
    pts.push(p);
    var k = Math.floor(x / cell) + ',' + Math.floor(y / cell);
    (grid[k] = grid[k] || []).push(p);
  }
  function free(x, y, r) {
    var cx = Math.floor(x / cell), cy = Math.floor(y / cell);
    for (var i = -1; i < 2; i++) for (var j = -1; j < 2; j++) {
      var c = grid[(cx + i) + ',' + (cy + j)];
      if (c) for (var k = 0; k < c.length; k++) {
        var a = c[k].x - x, b = c[k].y - y;
        if (a * a + b * b < r * r) return false;
      }
    }
    return true;
  }
  for (x = -20; x < W + 20; x += size(x, G)) add(x, G, true);
  for (var n = 0; n < 90000; n++) {
    x = rnd() * (W + 40) - 20; y = G + 2 + rnd() * (H - G + 18);
    if (free(x, y, size(x, y) * 0.8)) add(x, y, false);
  }
  pts.sort(function (a, b) { return a.x - b.x; });

  function tri(a, b, c) {
    var d = 2 * (a.x * (b.y - c.y) + b.x * (c.y - a.y) + c.x * (a.y - b.y));
    if (Math.abs(d) < 1e-9) d = 1e-9;
    var A = a.x * a.x + a.y * a.y, B = b.x * b.x + b.y * b.y, C = c.x * c.x + c.y * c.y;
    var ux = (A * (b.y - c.y) + B * (c.y - a.y) + C * (a.y - b.y)) / d;
    var uy = (A * (c.x - b.x) + B * (a.x - c.x) + C * (b.x - a.x)) / d;
    return { v: [a, b, c], x: ux, y: uy, r: (a.x - ux) * (a.x - ux) + (a.y - uy) * (a.y - uy) };
  }
  pts.forEach(function (p, i) { p.id = i; });
  var s = [{ x: -9000, y: -8000, id: -1 }, { x: 9000, y: -8100, id: -2 }, { x: 300, y: 9000, id: -3 }];
  var open = [tri(s[0], s[1], s[2])], done = [];
  pts.forEach(function (p) {
    var edges = {}, keep = [];
    open.forEach(function (t) {
      var dx = p.x - t.x;
      if (dx > 0 && dx * dx > t.r) { done.push(t); return; }
      if (dx * dx + (p.y - t.y) * (p.y - t.y) >= t.r) { keep.push(t); return; }
      for (var e = 0; e < 3; e++) {
        var a = t.v[e], b = t.v[(e + 1) % 3];
        var k = Math.min(a.id, b.id) + '_' + Math.max(a.id, b.id);
        if (edges[k]) edges[k] = 'x'; else edges[k] = [a, b];
      }
    });
    Object.keys(edges).forEach(function (k) { if (edges[k] !== 'x') keep.push(tri(edges[k][0], edges[k][1], p)); });
    open = keep;
  });
  var seen = {}, lines = [];
  done.concat(open).forEach(function (t) {
    for (var e = 0; e < 3; e++) {
      var a = t.v[e], b = t.v[(e + 1) % 3];
      if (a.id < 0 || b.id < 0) continue;
      var k = Math.min(a.id, b.id) + '_' + Math.max(a.id, b.id);
      if (!seen[k]) { seen[k] = 1; lines.push([a, b]); a.n.push(b); b.n.push(a); }
    }
  });
  for (n = 0; n < 4; n++) pts.forEach(function (p) {
    if (p.fixed || p.x < 0 || p.x > W || p.y > H) return;
    var sx = 0, sy = 0;
    p.n.forEach(function (q) { sx += q.x; sy += q.y; });
    p.x = sx / p.n.length; p.y = sy / p.n.length;
  });
  g.lineWidth = 1.1;
  lines.forEach(function (l) {
    var a = l[0], b = l[1];
    g.strokeStyle = css(color(groundStress((a.x + b.x) / 2, (a.y + b.y) / 2), 1));
    g.beginPath(); g.moveTo(a.x, a.y + 0.5); g.lineTo(b.x, b.y + 0.5); g.stroke();
  });

  // Load arrows
  [116, 199, 281, 364].forEach(function (cx) {
    var sh = g.createLinearGradient(cx - 9, 0, cx + 9, 0);
    sh.addColorStop(0, '#1138c8'); sh.addColorStop(0.5, '#0f34b0'); sh.addColorStop(1, '#10266c');
    g.fillStyle = sh; g.fillRect(cx - 9, 0, 18, 41);
    var hd = g.createLinearGradient(cx - 22, 50, cx + 22, 40);
    hd.addColorStop(0, '#1038b4'); hd.addColorStop(0.5, '#11309a'); hd.addColorStop(0.75, '#10246a'); hd.addColorStop(1, '#122c7c');
    g.fillStyle = hd;
    g.beginPath(); g.moveTo(cx - 22, 41); g.lineTo(cx + 22, 41); g.lineTo(cx, 85); g.fill();
  });

  // Sampling line and its marker
  g.fillStyle = '#62e832'; g.fillRect(IR, 278, R - IR, 1);
  g.strokeStyle = '#22b14c'; g.lineWidth = 2; g.strokeRect(312, 267, 63, 24);
})();
```
